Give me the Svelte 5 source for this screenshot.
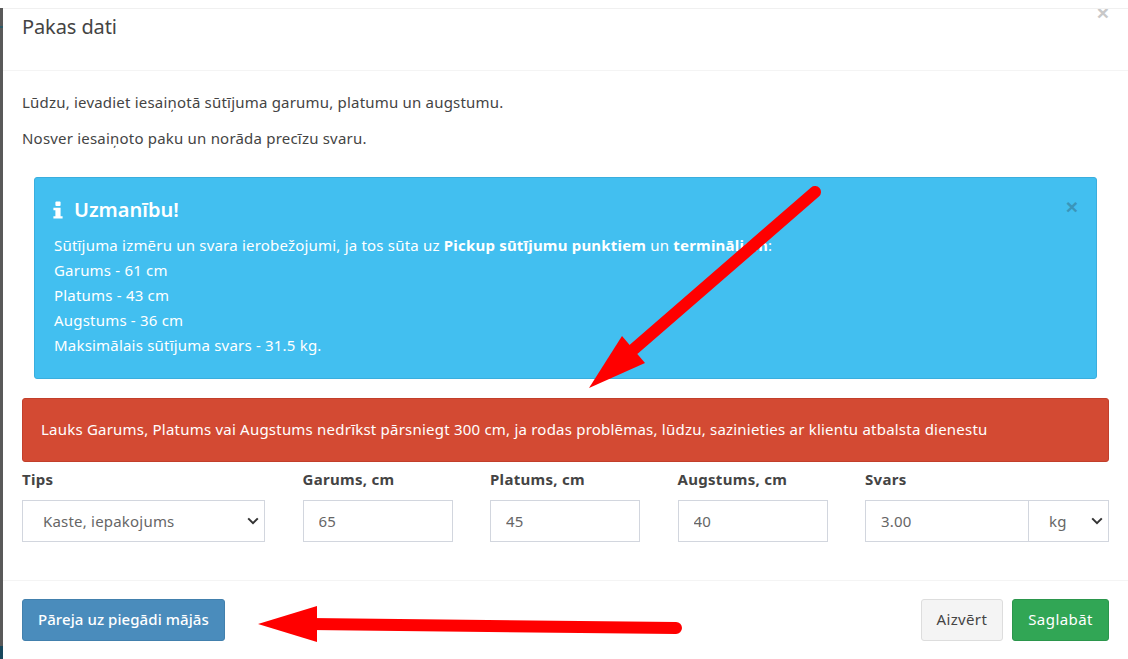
<script>
	const fields = [
		{ label: 'Garums, cm', value: '65' },
		{ label: 'Platums, cm', value: '45' },
		{ label: 'Augstums, cm', value: '40' }
	];
	const limits = ['Garums - 61 cm', 'Platums - 43 cm', 'Augstums - 36 cm', 'Maksimālais sūtījuma svars - 31.5 kg.'];
</script>

<div class="page">
	<div class="backdrop">
		<span class="tick"></span>
		<span class="bottom"></span>
	</div>
	<div class="modal">
		<header class="modal-header">
			<h4>Pakas dati</h4>
			<button class="close-modal" aria-label="Aizvērt">×</button>
		</header>

		<div class="modal-body">
			<p>Lūdzu, ievadiet iesaiņotā sūtījuma garumu, platumu un augstumu.</p>
			<p>Nosver iesaiņoto paku un norāda precīzu svaru.</p>

			<div class="alert-info">
				<button class="close-alert" aria-label="Aizvērt">×</button>
				<h4>
					<svg class="info-icon" viewBox="0 0 10 18" width="10" height="18">
						<rect x="2.4" y="0.5" width="5.2" height="4.4" rx="1"/>
						<path d="M0.4 6.8h7.2v8.4h2v2.4H0.4v-2.4h2V9.2h-2z"/>
					</svg>
					Uzmanību!
				</h4>
				<div>Sūtījuma izmēru un svara ierobežojumi, ja tos sūta uz <b>Pickup sūtījumu punktiem</b> un <b>termināliem</b>:</div>
				{#each limits as line}
					<div>{line}</div>
				{/each}
			</div>

			<div class="alert-error">Lauks Garums, Platums vai Augstums nedrīkst pārsniegt 300 cm, ja rodas problēmas, lūdzu, sazinieties ar klientu atbalsta dienestu</div>

			<div class="form-row">
				<div class="field">
					<span class="label">Tips</span>
					<div class="select-wrap">
						<select class="control type-select">
							<option>Kaste, iepakojums</option>
						</select>
						<svg class="chevron" viewBox="0 0 12 8" width="12" height="8"><path d="M1.2 1.4 6 6.2l4.8-4.8"/></svg>
					</div>
				</div>
				{#each fields as f}
					<div class="field">
						<span class="label">{f.label}</span>
						<input class="control" type="text" value={f.value} />
					</div>
				{/each}
				<div class="field">
					<span class="label">Svars</span>
					<div class="weight">
						<input class="control" type="text" value="3.00" />
						<div class="select-wrap unit">
							<select class="control unit-select">
								<option>kg</option>
							</select>
							<svg class="chevron" viewBox="0 0 12 8" width="12" height="8"><path d="M1.2 1.4 6 6.2l4.8-4.8"/></svg>
						</div>
					</div>
				</div>
			</div>
		</div>

		<footer class="modal-footer">
			<button class="btn btn-blue">Pāreja uz piegādi mājās</button>
			<div class="right">
				<button class="btn btn-default">Aizvērt</button>
				<button class="btn btn-green">Saglabāt</button>
			</div>
		</footer>
	</div>

	<!-- red annotation arrows drawn over the screenshot -->
	<svg class="arrows" viewBox="0 0 1128 659" width="1128" height="659">
		<path class="shaft" d="M815 192 634 349"/>
		<path class="head" d="M589 388 622 336 645 363z"/>
		<path class="shaft" d="M310 624 676 628"/>
		<path class="head" d="M258 624 317 606 317 642z"/>
	</svg>
</div>

<style>
	:global(body) {
		margin: 0;
		background: #fff;
		font-family: "Noto Sans", "Open Sans", sans-serif;
	}

	.page {
		position: relative;
		display: flex;
		width: 1128px;
		height: 659px;
		padding-top: 8px;
		box-sizing: border-box;
		overflow: hidden;
		color: #444;
	}

	.backdrop {
		position: relative;
		flex: 0 0 3px;
		background: #595959;
	}

	.tick {
		position: absolute;
		left: 0;
		top: 18px;
		width: 3px;
		height: 2px;
		background: #2c5a68;
	}

	.bottom {
		position: absolute;
		left: 0;
		bottom: 0;
		width: 3px;
		height: 13px;
		background: #17475c;
	}

	.modal {
		flex: 1;
		min-width: 0;
		display: flex;
		flex-direction: column;
		background: #fff;
		border-top: 1px solid #f0f0f0;
		overflow: hidden;
	}

	.modal-header {
		display: flex;
		justify-content: space-between;
		align-items: flex-start;
		height: 61px;
		padding: 0 19px;
		border-bottom: 1px solid #f4f4f4;
		flex-shrink: 0;
	}

	.modal-header h4 {
		margin: 5px 0 0;
		font-size: 20px;
		font-weight: 400;
		line-height: 26px;
		letter-spacing: -0.1px;
	}

	.close-modal,
	.close-alert {
		border: none;
		background: none;
		padding: 0;
		font-family: "Liberation Sans", sans-serif;
		font-weight: 700;
		line-height: 1;
	}

	.close-modal {
		margin: -7px 0 0;
		font-size: 21px;
		color: #c8c8c8;
	}

	.modal-body {
		flex: 1;
		padding: 21px 19px 0;
		font-size: 15px;
		letter-spacing: 0.2px;
	}

	p {
		margin: 0 0 16px;
		line-height: 20px;
	}

	.alert-info {
		position: relative;
		margin: 29px 12px 19px;
		height: 202px;
		box-sizing: border-box;
		padding: 19px 19px 0;
		background: #42bff0;
		border: 1px solid #3aaede;
		border-radius: 3px;
		color: #fff;
		line-height: 25px;
	}

	.alert-info h4 {
		display: flex;
		align-items: center;
		gap: 11px;
		margin: 0 0 10px;
		font-size: 20px;
		font-weight: 600;
		line-height: 26px;
		letter-spacing: 0;
	}

	.info-icon {
		fill: #fff;
		margin-left: -1px;
	}

	.alert-info b {
		font-weight: 700;
	}

	.close-alert {
		position: absolute;
		top: 18px;
		right: 18px;
		font-size: 21px;
		color: #3a95ba;
	}

	.alert-error {
		height: 64px;
		box-sizing: border-box;
		padding: 0 18px 2px;
		display: flex;
		align-items: center;
		background: #d34a33;
		border: 1px solid #c23f2b;
		border-radius: 3px;
		color: #fff;
		letter-spacing: 0.215px;
		white-space: nowrap;
	}

	.form-row {
		display: grid;
		grid-template-columns: 243px 150px 150px 150px 1fr;
		column-gap: 37.5px;
		margin-top: 7px;
	}

	.field {
		display: flex;
		flex-direction: column;
		min-width: 0;
	}

	.label {
		font-weight: 700;
		line-height: 20px;
		margin-bottom: 11px;
		letter-spacing: 0.3px;
	}

	.control {
		display: block;
		width: 100%;
		height: 42px;
		box-sizing: border-box;
		padding: 0 15px 1px;
		border: 1px solid #d2d6de;
		border-radius: 0;
		background: #fff;
		font: inherit;
		letter-spacing: 0.2px;
		color: #666;
		outline: none;
	}

	.select-wrap {
		position: relative;
	}

	select.control {
		appearance: none;
		-webkit-appearance: none;
	}

	.type-select {
		padding-left: 20px;
	}

	.unit-select {
		padding-left: 20px;
		border-left: none;
	}

	.chevron {
		position: absolute;
		right: 6px;
		top: 17px;
		pointer-events: none;
		fill: none;
		stroke: #333;
		stroke-width: 2;
	}

	.weight {
		display: flex;
	}

	.weight input {
		flex: 0 0 164px;
		width: 164px;
	}

	.unit {
		flex: 1;
	}

	.modal-footer {
		display: flex;
		justify-content: space-between;
		align-items: center;
		height: 79px;
		box-sizing: border-box;
		padding: 0 19px 1px;
		border-top: 1px solid #f4f4f4;
		flex-shrink: 0;
	}

	.right {
		display: flex;
		gap: 9px;
	}

	.btn {
		height: 42px;
		padding: 0 15px 1px;
		border-radius: 3px;
		font: inherit;
		font-size: 15px;
		letter-spacing: 0.2px;
		border: 1px solid transparent;
	}

	.btn-blue {
		background: #4a8cbc;
		border-color: #4280ad;
		color: #fff;
		font-weight: 500;
		letter-spacing: 0.07px;
	}

	.btn-default {
		background: #f4f4f4;
		border-color: #ddd;
		color: #444;
		letter-spacing: 0.35px;
	}

	.btn-green {
		background: #31a655;
		border-color: #2b964c;
		color: #fff;
		letter-spacing: 0.45px;
	}

	.arrows {
		position: absolute;
		left: 0;
		top: 0;
		pointer-events: none;
	}

	.shaft {
		fill: none;
		stroke: #f00;
		stroke-width: 12;
		stroke-linecap: round;
	}

	.head {
		fill: #f00;
	}
</style>
